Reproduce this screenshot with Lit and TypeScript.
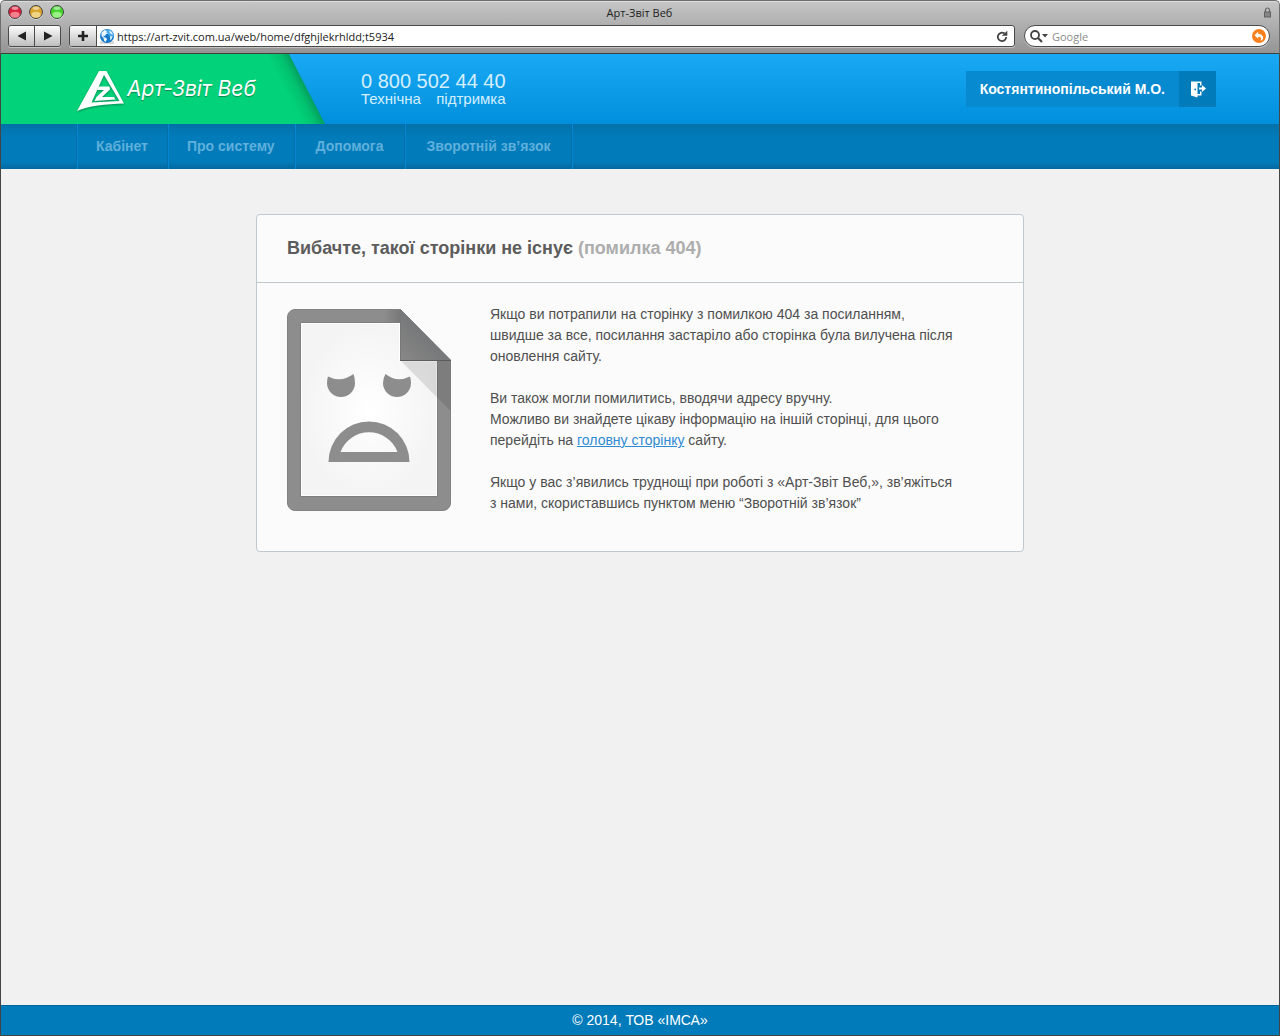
import { LitElement, html, css } from "lit";
import { customElement, property } from "lit/decorators.js";

@customElement("browser-bar")
class BrowserBar extends LitElement {
  @property() heading = "";
  @property() url = "";

  static styles = css`
    :host {
      display: block;
      font-family: "Open Sans", "Noto Sans", sans-serif;
      font-size: 11px;
      color: #222;
    }
    .chrome {
      box-sizing: border-box;
      height: 54px;
      border: 1px solid #6e6e6e;
      border-bottom-color: #3f3f3f;
      border-radius: 5px 5px 0 0;
      background: linear-gradient(#c6c6c6, #949494);
      box-shadow: inset 0 1px #dcdcdc;
    }
    .title {
      display: grid;
      grid-template-columns: 1fr auto 1fr;
      align-items: center;
      height: 22px;
      padding: 0 7px 0 6px;
    }
    .lights {
      display: flex;
      gap: 5px;
    }
    .light {
      box-sizing: border-box;
      width: 16px;
      height: 16px;
      padding: 0;
      border: 0;
      background: none;
    }
    .light svg {
      display: block;
    }
    .lock {
      justify-self: end;
      display: block;
    }
    .tools {
      display: flex;
      padding: 2px 9px 0 7px;
    }
    .group {
      display: flex;
      box-sizing: border-box;
      height: 22px;
      border: 1px solid #4a4a4a;
      border-radius: 3px;
      overflow: hidden;
      box-shadow: 0 1px #c4c4c4;
    }
    .history {
      width: 53px;
      margin-right: 8px;
    }
    .address {
      flex: 1;
      margin-right: 9px;
      background: #fff;
    }
    .search {
      width: 246px;
      border-radius: 11px;
      background: #fff;
      align-items: center;
      padding: 0 3px 0 5px;
    }
    .tool {
      display: grid;
      place-items: center;
      flex: 1;
      padding: 0;
      border: 0;
      background: linear-gradient(#fcfcfc, #bebebe);
    }
    .tool + .tool {
      border-left: 1px solid #4a4a4a;
    }
    .add {
      flex: none;
      width: 27px;
      border-right: 1px solid #4a4a4a;
    }
    .plain {
      display: grid;
      place-items: center;
      border: 0;
      padding: 0;
      background: none;
    }
    .reload {
      width: 24px;
    }
    .globe {
      align-self: center;
      margin-left: 2px;
    }
    .field {
      flex: 1;
      min-width: 0;
      border: 0;
      padding: 0 3px 0 2px;
      outline: 0;
      background: none;
      font: inherit;
      color: #222;
    }
    .field::placeholder {
      color: #8c8c8c;
      opacity: 1;
    }
  `;

  private light(label: string, dark: string, pale: string) {
    return html`<button class="light" aria-label=${label}>
      <svg width="16" height="16" viewBox="0 0 16 16">
        <circle cx="8" cy="8.500" r="7.200" fill="#e2e2e2" />
        <circle cx="8" cy="8" r="6.500" fill=${dark} stroke="#444" />
        <ellipse cx="8" cy="10.800" rx="4.600" ry="3" fill=${pale} opacity="0.650" />
        <ellipse cx="8" cy="4.300" rx="3.400" ry="1.700" fill="#fff" opacity="0.500" />
      </svg>
    </button>`;
  }

  render() {
    return html`
      <div class="chrome">
        <div class="title">
          <div class="lights">
            ${this.light("Закрити", "#d9203c", "#ffb3b8")}
            ${this.light("Згорнути", "#d7a32c", "#fdeeb4")}
            ${this.light("Розгорнути", "#43d32c", "#c8ffb8")}
          </div>
          <span>${this.heading}</span>
          <svg class="lock" width="9" height="11" viewBox="0 0 9 11">
            <path d="M2.500 5V3a2 2 0 0 1 4 0v2" fill="none" stroke="#666" stroke-width="1.200" />
            <rect x="1.500" y="5" width="6" height="5" fill="#858585" stroke="#606060" />
          </svg>
        </div>
        <div class="tools">
          <div class="group history">
            <button class="tool" aria-label="Назад">
              <svg width="10" height="10" viewBox="0 0 10 10"><path d="M9 0.500v9L0.500 5z" fill="#222" /></svg>
            </button>
            <button class="tool" aria-label="Вперед">
              <svg width="10" height="10" viewBox="0 0 10 10"><path d="M1 0.500v9l8.500-4.500z" fill="#222" /></svg>
            </button>
          </div>
          <div class="group address">
            <button class="tool add" aria-label="Додати закладку">
              <svg width="12" height="12" viewBox="0 0 12 12">
                <path d="M6 1v10M1 6h10" stroke="#222" stroke-width="2.600" />
              </svg>
            </button>
            <svg class="globe" width="16" height="16" viewBox="0 0 16 16">
              <rect x="1" y="13" width="14" height="3" fill="#d8d8d8" />
              <circle cx="8" cy="8" r="7" fill="#1878cc" />
              <path d="M8 1a7 7 0 0 1 7 7l-3 2-4-5z" fill="#49a8ea" />
              <path d="M2.500 4.500l3-2.500 2.500.8-.5 1.700 1.500 1-2 .7-1 1.800-1.500-.5.3 1.500 2.200.8 1 1.500-1.500 2.700-1.500-1.500-.5-2.500-2-2z" fill="#e9f5ff" />
              <path d="M10 2.500l2.800 1.500 1.200 2.500-1.800-.3-1.500-1.500zM11 8l2.500.5-.8 2.500-1.500 1.500z" fill="#d8eeff" />
            </svg>
            <input class="field" type="text" aria-label="Адреса сторінки" .value=${this.url} />
            <button class="plain reload" aria-label="Оновити">
              <svg width="12" height="13" viewBox="0 0 12 13">
                <path d="M8.500 3.500A4.200 4.200 0 1 0 10.200 7" fill="none" stroke="#444" stroke-width="1.800" />
                <path d="M6 0.500v5.500h5z" fill="#444" transform="rotate(-90 8.500 3.200)" />
              </svg>
            </button>
          </div>
          <div class="group search">
            <svg width="20" height="13" viewBox="0 0 20 13">
              <circle cx="5" cy="5" r="4" fill="none" stroke="#444" stroke-width="1.800" />
              <path d="M8 8l4 4" stroke="#444" stroke-width="2.200" />
              <path d="M12 4h6l-3 3.500z" fill="#444" />
            </svg>
            <input class="field" type="search" aria-label="Пошук" placeholder="Google" />
            <button class="plain" aria-label="Скинути пошук">
              <svg width="14" height="14" viewBox="0 0 14 14">
                <circle cx="7" cy="7" r="7" fill="#f8801c" />
                <path d="M2.500 6.200L6.200 2.800v2.200c3.500 0 5.300 1.800 4.800 4.500-.4 1.500-1.500 2-2.500 2 1.200-1.800.7-3.700-2.300-3.700v2z" fill="#fff" />
              </svg>
            </button>
          </div>
        </div>
      </div>
    `;
  }
}

@customElement("site-header")
class SiteHeader extends LitElement {
  private items = ["Кабінет", "Про систему", "Допомога", "Зворотній зв’язок"];

  static styles = css`
    :host {
      display: block;
    }
    .top {
      display: flex;
      height: 70px;
      background: linear-gradient(#1aa9f4, #008fdc);
    }
    .brand {
      display: flex;
      align-items: center;
      gap: 2px;
      box-sizing: border-box;
      width: 324px;
      padding-left: 75px;
      background: linear-gradient(63deg, #02d37a 268px, #02c26f 280px, #059a5c 290px);
      clip-path: polygon(0 0, 288px 0, 324px 100%, 0 100%);
      color: #fff;
      text-decoration: none;
      font: italic 21px/28px Inter, "Open Sans", sans-serif;
      text-shadow: 0 1px 1px #06854f;
    }
    .mark {
      display: block;
      flex: none;
      filter: drop-shadow(0 1px 1px #06854f);
    }
    .support {
      display: flex;
      flex-direction: column;
      padding: 17px 0 0 36px;
      color: #d4efff;
    }
    .phone {
      color: inherit;
      text-decoration: none;
      font-size: 20px;
      line-height: 20px;
    }
    .caption {
      display: flex;
      justify-content: space-between;
      font-size: 15px;
      line-height: 16px;
    }
    .user {
      display: flex;
      margin: 17px 63px 17px auto;
      background: #078ad0;
      color: #fff;
      font-weight: bold;
      font-size: 14px;
      line-height: 36px;
    }
    .name {
      padding: 0 14px;
    }
    .exit {
      display: grid;
      place-items: center;
      width: 37px;
      padding: 0;
      border: 0;
      background: #027bbb;
    }
    .nav {
      display: flex;
      height: 45px;
      padding-left: 75px;
      background: linear-gradient(#0370a8, #027bba 12px, #027bba 38px, #03689f);
      font-size: 14px;
      font-weight: bold;
      line-height: 45px;
    }
    .item {
      padding: 0 19px;
      color: #5fb0dc;
      text-decoration: none;
    }
    .item:nth-child(n + 3) {
      padding: 0 21px;
    }
    .item,
    .rest {
      border-left: 1px solid #036fa9;
      box-shadow: inset 1px 0 #0586d2;
    }
    .rest {
      width: 2px;
    }
  `;

  render() {
    return html`
      <header class="top">
        <a class="brand" href="#">
          <svg class="mark" width="49" height="46" viewBox="0 -4 49 46">
            <path
              fill="#fff"
              fill-rule="evenodd"
              d="M23 1h7.500L48 33.500C30 34 12 36 1 41zM28 5L15.500 32.500 43.500 31zM22.500 16.500H33.500L34 19.500 26 27H38L39.500 29.500 18.500 31 20.500 27 28 20H21.500z"
            />
          </svg>
          <span>Арт-Звіт Веб</span>
        </a>
        <div class="support">
          <a class="phone" href="tel:08005024440">0 800 502 44 40</a>
          <span class="caption"><span>Технічна</span> <span>підтримка</span></span>
        </div>
        <div class="user">
          <span class="name">Костянтинопільський М.О.</span>
          <button class="exit" aria-label="Вийти">
            <svg width="16" height="18" viewBox="0 0 16 18">
              <path d="M1 1.500h10.500v4H10V3H7.500v11H10v-2.500h1.500v4h-4v2L1 15.500z" fill="#fff" />
              <path d="M9 7.500h3V5l4 3.500-4 3.500V9.500H9z" fill="#fff" />
              <circle cx="5.200" cy="9.500" r="0.900" fill="#027bbb" />
            </svg>
          </button>
        </div>
      </header>
      <nav class="nav">
        ${this.items.map((item) => html`<a class="item" href="#">${item}</a>`)}
        <span class="rest"></span>
      </nav>
    `;
  }
}

@customElement("sad-page")
class SadPage extends LitElement {
  static styles = css`
    :host,
    .art {
      display: block;
    }
  `;

  render() {
    return html`
      <svg class="art" width="164" height="202" viewBox="0 0 164 202" role="img" aria-label="Сторінку не знайдено">
        <defs>
          <radialGradient id="paper">
            <stop offset="0" stop-color="#fff" />
            <stop offset="1" stop-color="#f4f4f4" />
          </radialGradient>
          <linearGradient id="fold" x1="0" y1="1" x2="0.700" y2="0.300">
            <stop offset="0" stop-color="#888" />
            <stop offset="1" stop-color="#707173" />
          </linearGradient>
          <linearGradient id="edge">
            <stop offset="0" stop-color="#777" stop-opacity="0" />
            <stop offset="1" stop-color="#777" />
          </linearGradient>
        </defs>
        <path
          d="M8 .5H113.500L163.500 51V194a7.500 7.500 0 0 1-7.500 7.500H8A7.500 7.500 0 0 1 .5 194V8A7.500 7.500 0 0 1 8 .5z"
          fill="#8d8d8d"
          stroke="#828282"
        />
        <rect x="97" y="1" width="17" height="13" fill="url(#edge)" />
        <path d="M13.500 13.500H113.500V51.500H150.500V187.500H13.500z" fill="url(#paper)" stroke="#7e7e7e" />
        <path d="M14.500 14.500H112.500V52.500H149.500V186.500H14.500z" fill="none" stroke="#fff" />
        <path d="M113.500 51.500L163.500 102V51z" fill="#000" opacity="0.110" />
        <path d="M113 0L164 51.500H113z" fill="url(#fold)" />
        <path d="M113.500 1V51.500" stroke="#777" />
        <path d="M113 51.500H164" stroke="#5c5c5c" />
        <path d="M41 67.500Q54 74 66.500 65Q68 69 68 74A14 14 0 0 1 40 74Q40 70 41 67.500z" fill="#8d8d8d" />
        <path d="M123 67.500Q110 74 98.500 65Q96 69 96 74A14 14 0 0 0 124 74Q124 70 123 67.500z" fill="#8d8d8d" />
        <path
          fill="#8d8d8d"
          fill-rule="evenodd"
          d="M41.500 153A40.500 40.500 0 0 1 122.500 153zM53.500 143H110.500A30.500 30.500 0 0 0 53.500 143z"
        />
      </svg>
    `;
  }
}

@customElement("app-root")
class AppRoot extends LitElement {
  static styles = css`
    :host {
      display: flex;
      flex-direction: column;
      min-height: 100vh;
      background: #fff;
      font-family: "Liberation Sans", Arial, sans-serif;
      color: #4f4f4f;
    }
    .window {
      flex: 1;
      display: flex;
      flex-direction: column;
      border: 1px solid #454545;
      border-top: 0;
      background: #f1f1f1;
    }
    .content {
      flex: 1;
      padding: 45px 20px;
    }
    .card {
      box-sizing: border-box;
      max-width: 768px;
      margin: 0 auto;
      border: 1px solid #bfc9cd;
      border-radius: 4px;
      background: #fbfbfb;
    }
    .title {
      margin: 0;
      padding: 0 30px;
      border-bottom: 1px solid #bfc9cd;
      font-size: 18px;
      line-height: 67px;
      color: #5c5c5c;
    }
    .code {
      color: #adadad;
    }
    .body {
      display: flex;
      gap: 39px;
      padding: 21px 30px 37px;
      font-size: 14px;
      line-height: 21px;
    }
    .picture {
      flex: none;
      padding-top: 5px;
    }
    .para {
      margin: 0 0 21px;
    }
    .para:last-child {
      margin-bottom: 0;
    }
    .link {
      color: #2f8ad4;
    }
    .footer {
      border-top: 1px solid #03669b;
      background: #027bba;
      color: #fff;
      text-align: center;
      font-size: 14px;
      line-height: 29px;
    }
  `;

  render() {
    return html`
      <browser-bar heading="Арт-Звіт Веб" url="https://art-zvit.com.ua/web/home/dfghjlekrhldd;t5934"></browser-bar>
      <div class="window">
        <site-header></site-header>
        <main class="content">
          <section class="card">
            <h1 class="title">Вибачте, такої сторінки не існує <span class="code">(помилка 404)</span></h1>
            <div class="body">
              <sad-page class="picture"></sad-page>
              <div>
                <p class="para">
                  Якщо ви потрапили на сторінку з помилкою 404 за посиланням,<br />
                  швидше за все, посилання застаріло або сторінка була вилучена після<br />
                  оновлення сайту.
                </p>
                <p class="para">
                  Ви також могли помилитись, вводячи адресу вручну.<br />
                  Можливо ви знайдете цікаву інформацію на іншій сторінці, для цього<br />
                  перейдіть на <a class="link" href="#">головну сторінку</a> сайту.
                </p>
                <p class="para">
                  Якщо у вас з’явились труднощі при роботі з «Арт-Звіт Веб,», зв’яжіться<br />
                  з нами, скориставшись пунктом меню “Зворотній зв’язок”
                </p>
              </div>
            </div>
          </section>
        </main>
        <footer class="footer">© 2014, ТОВ «ІМСА»</footer>
      </div>
    `;
  }
}
